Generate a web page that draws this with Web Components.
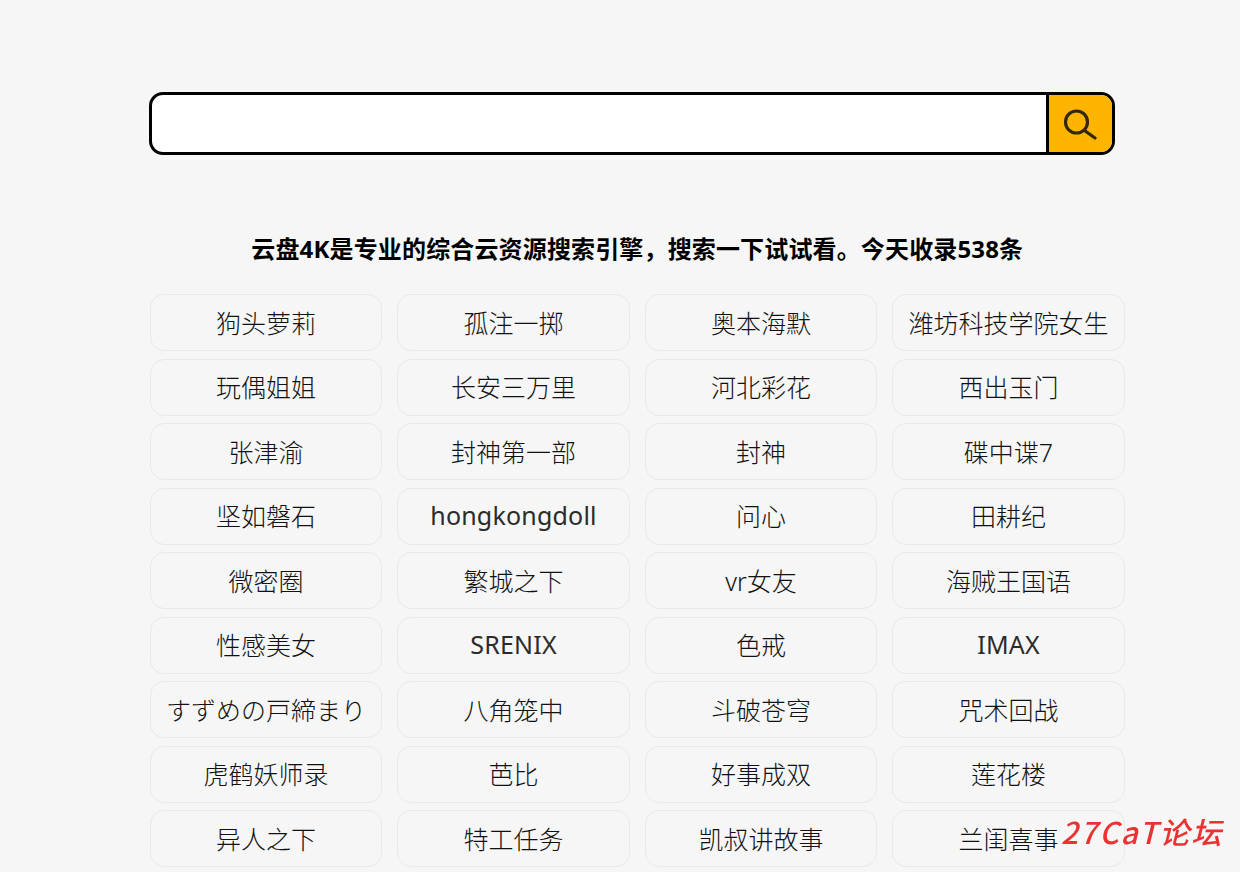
<!DOCTYPE html>
<html lang="zh-CN">
<head>
<meta charset="utf-8">
<title>云盘4K</title>
<style>
  html, body { margin: 0; height: 100%; overflow: hidden; background: #f6f6f6; }
  body { font-family: "Noto Sans", "Noto Sans CJK SC", sans-serif; color: #111; }
</style>
</head>
<body>
<search-page>
  <search-bar></search-bar>
  <span slot="title">云盘4K是专业的综合云资源搜索引擎，搜索一下试试看。今天收录538条</span>
  <tag-item>狗头萝莉</tag-item><tag-item>孤注一掷</tag-item><tag-item>奥本海默</tag-item><tag-item>潍坊科技学院女生</tag-item>
  <tag-item>玩偶姐姐</tag-item><tag-item>长安三万里</tag-item><tag-item>河北彩花</tag-item><tag-item>西出玉门</tag-item>
  <tag-item>张津渝</tag-item><tag-item>封神第一部</tag-item><tag-item>封神</tag-item><tag-item>碟中谍7</tag-item>
  <tag-item>坚如磐石</tag-item><tag-item latin>hongkongdoll</tag-item><tag-item>问心</tag-item><tag-item>田耕纪</tag-item>
  <tag-item>微密圈</tag-item><tag-item>繁城之下</tag-item><tag-item>vr女友</tag-item><tag-item>海贼王国语</tag-item>
  <tag-item>性感美女</tag-item><tag-item latin>SRENIX</tag-item><tag-item>色戒</tag-item><tag-item latin>IMAX</tag-item>
  <tag-item lang="ja">すずめの戸締まり</tag-item><tag-item>八角笼中</tag-item><tag-item>斗破苍穹</tag-item><tag-item>咒术回战</tag-item>
  <tag-item>虎鹤妖师录</tag-item><tag-item>芭比</tag-item><tag-item>好事成双</tag-item><tag-item>莲花楼</tag-item>
  <tag-item>异人之下</tag-item><tag-item>特工任务</tag-item><tag-item>凯叔讲故事</tag-item><tag-item>兰闺喜事</tag-item>
</search-page>
<site-mark>27CaT论坛</site-mark>
<script>
class SearchPage extends HTMLElement {
  constructor() {
    super();
    this.attachShadow({ mode: "open" });
    this.shadowRoot.innerHTML = `
    <style>
      :host { display: block; width: 975px; padding: 92px 0 0 149.75px; }
      .search { margin-left: -0.75px; }
      h1 {
        margin: 78px 0 0;
        height: 33px;
        font: bold 24px/32px "Noto Sans", "Noto Sans CJK SC", sans-serif;
        letter-spacing: 0.15px;
        color: #000;
        text-align: center;
      }
      .tags {
        display: grid;
        grid-template-columns: repeat(4, 1fr);
        column-gap: 15px;
        row-gap: 7.5px;
        margin-top: 28px;
      }
    </style>
    <div class="search"><slot></slot></div>
    <h1><slot name="title"></slot></h1>
    <div class="tags"><slot name="tags"></slot></div>`;
  }
  connectedCallback() {
    for (const tag of this.querySelectorAll("tag-item")) tag.slot = "tags";
  }
}

class SearchBar extends HTMLElement {
  constructor() {
    super();
    this.attachShadow({ mode: "open" });
    this.shadowRoot.innerHTML = `
    <style>
      :host { display: block; width: 966px; }
      .box {
        display: flex;
        height: 63px;
        box-sizing: border-box;
        border: 3px solid #000;
        border-radius: 14px;
        overflow: hidden;
        background: #fff;
      }
      input { flex: 1; min-width: 0; border: 0; outline: 0; background: none; padding: 0 16px; font: 20px "Noto Sans", sans-serif; }
      button {
        display: flex;
        align-items: center;
        justify-content: center;
        width: 66px;
        padding: 0;
        border: 0;
        border-left: 3px solid #000;
        background: #ffb400;
      }
      svg { width: 34px; height: 34px; margin-left: -1px; }
    </style>
    <div class="box">
      <input type="text" aria-label="搜索">
      <button aria-label="搜索">
        <svg viewBox="0 0 34 34" fill="none" stroke="#33280a" stroke-linecap="round" stroke-width="3.2">
          <circle cx="13.5" cy="15" r="11"/>
          <path d="M21.5 23.5 L32 31"/>
        </svg>
      </button>
    </div>`;
  }
}

class TagItem extends HTMLElement {
  constructor() {
    super();
    this.attachShadow({ mode: "open" });
    this.shadowRoot.innerHTML = `
    <style>
      :host {
        display: flex;
        align-items: center;
        justify-content: center;
        height: 57px;
        box-sizing: border-box;
        padding-bottom: 2px;
        border: 1px solid #e9e9e9;
        border-radius: 14px;
        font-size: 25px;
        font-weight: 300;
        color: #111;
        white-space: nowrap;
      }
      :host([latin]) { font-weight: 400; color: #2b2b2b; letter-spacing: 0.2px; }
    </style>
    <slot></slot>`;
  }
}

class SiteMark extends HTMLElement {
  constructor() {
    super();
    this.attachShadow({ mode: "open" });
    this.shadowRoot.innerHTML = `
    <style>
      :host {
        position: fixed;
        left: 1061px;
        top: 810px;
        font: italic 500 30px/42px "Noto Sans CJK SC", sans-serif;
        letter-spacing: 2px;
        color: #ea3232;
        white-space: nowrap;
      }
    </style>
    <slot></slot>`;
  }
}

customElements.define("search-page", SearchPage);
customElements.define("search-bar", SearchBar);
customElements.define("tag-item", TagItem);
customElements.define("site-mark", SiteMark);
</script>
</body>
</html>
